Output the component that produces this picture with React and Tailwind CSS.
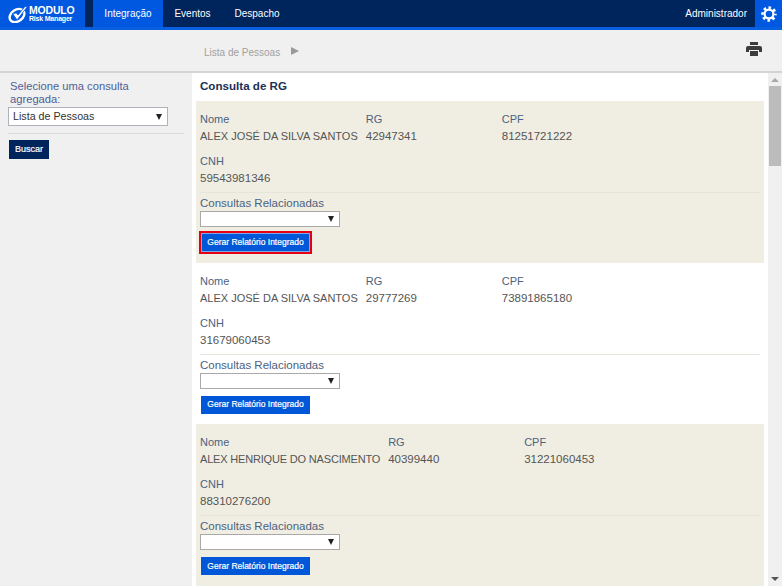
import React from "react";

const people = [
  { nome: "ALEX JOSÉ DA SILVA SANTOS", rg: "42947341", cpf: "81251721222", cnh: "59543981346", tint: true, active: true },
  { nome: "ALEX JOSÉ DA SILVA SANTOS", rg: "29777269", cpf: "73891865180", cnh: "31679060453" },
  { nome: "ALEX HENRIQUE DO NASCIMENTO", rg: "40399440", cpf: "31221060453", cnh: "88310276200", tint: true, long: true },
];

function Caret() {
  return <span className="w-0 h-0 border-x-[3.5px] border-x-transparent border-t-[6px] border-t-[#222]" />;
}

function Field({ label, value, numeric, long, className = "" }) {
  return (
    <div className={className}>
      <div className="text-[#4b6280] text-[11px] h-[17px] leading-[17px]">{label}</div>
      <div className={`text-[#555] h-[17px] leading-[17px] whitespace-nowrap ${numeric ? "text-[11.5px]" : "text-[11px]"} ${long ? "tracking-[-0.18px]" : ""}`}>{value}</div>
    </div>
  );
}

function PersonCard({ p }) {
  return (
    <div className={`pl-[4px] pr-[4px] pt-[7px] h-[161.5px] ${p.tint ? "bg-[#f0eee2]" : "bg-white"}`}>
      <div className="flex pt-[3px]">
        <Field label="Nome" value={p.nome} long={p.long} className="pr-[8px]" />
        <Field label="RG" value={p.rg} numeric className="w-[136px]" />
        <Field label="CPF" value={p.cpf} numeric />
      </div>
      <Field label="CNH" value={p.cnh} numeric className="mt-[8px]" />
      <div className="border-t border-[#e6e5da] mt-[5px] pt-[2px]">
        <div className="text-[11.5px] text-[#4b6280] h-[16px] leading-[17px]">Consultas Relacionadas</div>
        <div className="w-[140px] h-[16px] bg-white border border-[#a9a9a9] flex items-center justify-end pr-[5px]">
          <Caret />
        </div>
        {p.active ? (
          <div className="w-[113px] border-2 border-[#e60012] mt-[4px] -ml-[1px]">
            <button className="block bg-[#0057d8] border border-[#7fa8ea] text-white text-[8.5px] [-webkit-text-stroke:0.2px_white] h-[19px] w-[109px] whitespace-nowrap">
              Gerar Relatório Integrado
            </button>
          </div>
        ) : (
          <button className="block bg-[#0057d8] text-white text-[8.5px] [-webkit-text-stroke:0.2px_white] h-[18px] w-[109px] mt-[7px] ml-[1px] whitespace-nowrap">
            Gerar Relatório Integrado
          </button>
        )}
      </div>
    </div>
  );
}

export default function App() {
  return (
    <div className="w-[782px] h-[586px] overflow-hidden flex flex-col bg-[#f0f0f0] font-['Liberation_Sans',Arial,sans-serif]">
      <header className="h-[30px] shrink-0 bg-[#00245c] border-b-[3px] border-[#0a5fe0] flex items-stretch text-[10px] text-white">
        <div className="w-[85px] bg-[#0057e0] flex items-center pl-[8px] gap-[1px]">
          <svg width="20" height="18" viewBox="0 0 20 18">
            <ellipse cx="9" cy="10.5" rx="8" ry="5.8" fill="none" stroke="#fff" strokeWidth="2.4" transform="rotate(-35 9 10.5)" />
            <path d="M4.5 8.5 L8.5 8 L10 10 L17 1.5 L19.5 1.5 L9 15 Z" fill="#fff" stroke="#0057e0" strokeWidth="0.8" />
          </svg>
          <div className="leading-none font-bold">
            <div className="text-[10.5px] tracking-[-0.2px]">MODULO</div>
            <div className="text-[7px] tracking-[-0.2px] mt-[-1px]">Risk Manager</div>
          </div>
        </div>
        <div className="w-[8px]" />
        <nav className="flex">
          <a className="w-[70px] bg-[#0057e0] flex items-center justify-center">Integração</a>
          <a className="w-[59px] flex items-center justify-center">Eventos</a>
          <a className="w-[70px] flex items-center justify-center">Despacho</a>
        </nav>
        <div className="ml-auto flex items-center pr-[8px]">Administrador</div>
        <div className="w-[27px] bg-[#0057e0] flex items-center justify-center">
          <svg width="16" height="16" viewBox="0 0 16 16" fill="none" stroke="#fff">
            <circle cx="8" cy="8" r="4.4" strokeWidth="2.2" />
            <circle cx="8" cy="8" r="6.4" strokeWidth="2.6" strokeDasharray="2.6 2.43" strokeDashoffset="1.3" />
          </svg>
        </div>
      </header>

      <div className="h-[43px] shrink-0 border-b-2 border-[#d4d4d4] flex items-center pl-[204px] pr-[20px] pt-[3px] text-[10px] text-[#a0a0a0]">
        <span>Lista de Pessoas</span>
        <span className="ml-[11px] -mt-[3px] w-0 h-0 border-y-[4px] border-y-transparent border-l-[8px] border-l-[#999]" />
        <svg className="ml-auto -mt-[6px]" width="16" height="14" viewBox="0 0 16 14" fill="#3c3c3c">
          <path d="M4 0h8v3H4z" />
          <path d="M2 4h12a2 2 0 0 1 2 2v4h-3V8H3v2H0V6a2 2 0 0 1 2-2z" />
          <path d="M4 9h8v5H4z" />
        </svg>
      </div>

      <div className="flex flex-1 min-h-0">
        <aside className="w-[192px] shrink-0 pl-[8px] pr-[8px] pt-[7px]">
          <div className="w-[140px] text-[11.2px] leading-[13px] text-[#4f5f96] pl-[2px]">Selecione uma consulta agregada:</div>
          <div className="w-[160px] h-[19px] mt-[1px] bg-white border border-[#aeb2bd] flex items-center justify-between pl-[4px] pr-[5px] text-[10.7px] text-[#333]">
            <span>Lista de Pessoas</span>
            <Caret />
          </div>
          <div className="border-t border-[#dcdcdc] mt-[7px]" />
          <button className="block mt-[6px] ml-[1px] w-[40px] h-[19px] bg-[#00245c] text-white text-[9px] [-webkit-text-stroke:0.2px_white]">Buscar</button>
        </aside>

        <main className="flex-1 bg-white min-w-0 flex">
          <div className="flex-1 min-w-0 pl-[4px] pr-[4px]">
            <h1 className="h-[28px] pl-[4px] pt-[5px] text-[11.6px] leading-[15px] font-bold text-[#1c2f55]">Consulta de RG</h1>
            {people.map((p) => (
              <PersonCard key={p.rg} p={p} />
            ))}
          </div>
          <div className="w-[14px] shrink-0 bg-[#f0f0f0] flex flex-col items-center">
            <span className="mt-[5px] w-0 h-0 border-x-[4px] border-x-transparent border-b-[4px] border-b-[#a8a8a8]" />
            <div className="w-[12px] h-[80px] bg-[#bcbcbc] mt-[4px]" />
            <span className="mt-auto mb-[5px] w-0 h-0 border-x-[4px] border-x-transparent border-t-[4px] border-t-[#555]" />
          </div>
        </main>
      </div>
    </div>
  );
}
